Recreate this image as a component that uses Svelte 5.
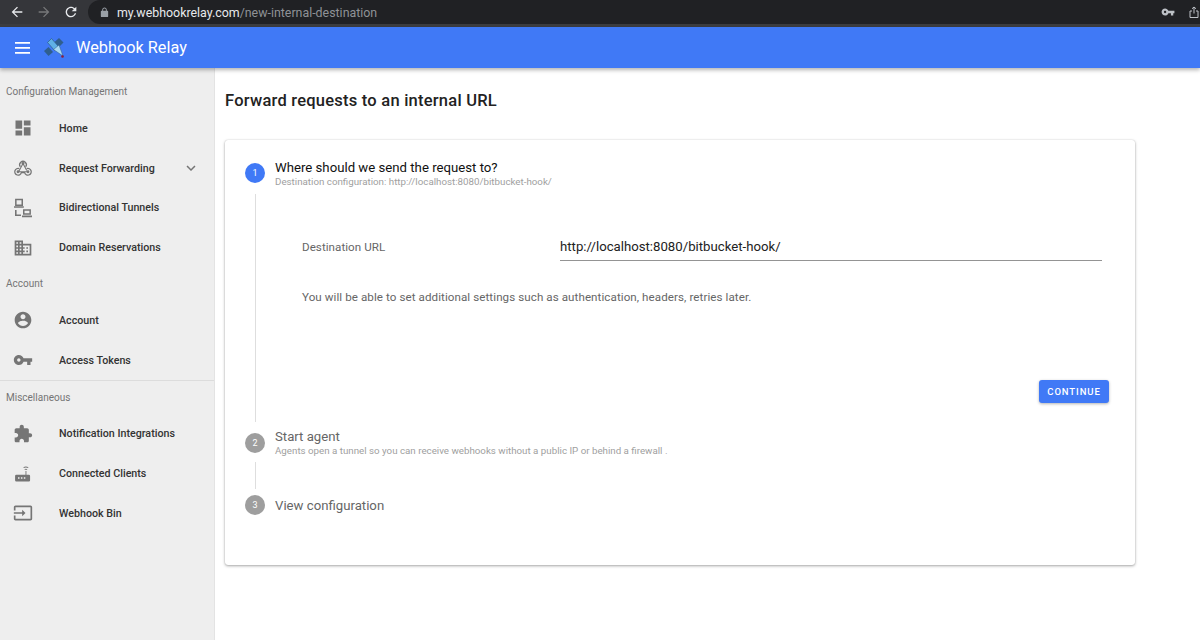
<script>
  const groups = [
    { title: 'Configuration Management', items: [
      ['Home', 'dashboard'], ['Request Forwarding', 'webhook', true], ['Bidirectional Tunnels', 'tunnels'], ['Domain Reservations', 'domain']
    ]},
    { title: 'Account', items: [['Account', 'account'], ['Access Tokens', 'key']] },
    { title: 'Miscellaneous', divider: true, items: [['Notification Integrations', 'puzzle'], ['Connected Clients', 'router'], ['Webhook Bin', 'input']] }
  ];
</script>

{#snippet icon(name)}
  <svg class="icon" viewBox="0 0 24 24" fill="#757575">
    {#if name === 'dashboard'}
      <path d="M3 13h8V3H3v10zm0 8h8v-6H3v6zm10 0h8V11h-8v10zm0-18v6h8V3h-8z"/>
    {:else if name === 'webhook'}
      <g fill="none" stroke="#757575" stroke-width="1.500">
        <path d="M8.800 10.500A4 4 0 1 1 15.200 10.500"/>
        <path d="M7.500 12.800A4 4 0 1 0 10 17.500h4A4 4 0 1 0 16.500 12.800"/>
        <path d="M12 6.500 7 16M12 6.500 16.500 15M7 16.500h10.500" stroke-width="1.300"/>
      </g>
      <circle cx="12" cy="6.500" r="1.700"/><circle cx="6" cy="16.500" r="1.700"/><circle cx="18" cy="16.500" r="1.700"/>
    {:else if name === 'tunnels'}
      <path fill-rule="evenodd" d="M2.500 1h9.500v8.500H2.500zM4.300 2.800v4.900h5.900V2.800zM1.200 10h11.800v1.800H1.200zM12 13.500h9.500V20H12zm1.800 1.800v2.900h5.900v-2.900zM10.800 21h12v2H10.800zM2.400 14.500h1.900v5.200h5.300v1.900H2.400z"/>
    {:else if name === 'domain'}
      <path d="M12 7V3H2v18h20V7H12zM6 19H4v-2h2v2zm0-4H4v-2h2v2zm0-4H4V9h2v2zm0-4H4V5h2v2zm4 12H8v-2h2v2zm0-4H8v-2h2v2zm0-4H8V9h2v2zm0-4H8V5h2v2zm10 12h-8v-2h2v-2h-2v-2h2v-2h-2V9h8v10zm-2-8h-2v2h2v-2zm0 4h-2v2h2v-2z"/>
    {:else if name === 'account'}
      <path d="M12 2C6.480 2 2 6.480 2 12s4.480 10 10 10 10-4.480 10-10S17.520 2 12 2zm0 3c1.660 0 3 1.340 3 3s-1.340 3-3 3-3-1.340-3-3 1.340-3 3-3zm0 14.200c-2.500 0-4.710-1.280-6-3.220.03-1.990 4-3.080 6-3.080 1.990 0 5.970 1.090 6 3.080-1.290 1.940-3.500 3.220-6 3.220z"/>
    {:else if name === 'key'}
      <path d="M12.650 10C11.830 7.670 9.610 6 7 6c-3.310 0-6 2.690-6 6s2.690 6 6 6c2.610 0 4.830-1.670 5.650-4H17v4h4v-4h2v-4H12.650zM7 14c-1.100 0-2-.9-2-2s.9-2 2-2 2 .9 2 2-.9 2-2 2z"/>
    {:else if name === 'puzzle'}
      <path d="M20.500 11H19V7c0-1.100-.9-2-2-2h-4V3.500C13 2.120 11.880 1 10.500 1S8 2.120 8 3.500V5H4c-1.100 0-1.990.9-1.990 2v3.800H3.500c1.490 0 2.700 1.210 2.700 2.700s-1.210 2.700-2.700 2.700H2V20c0 1.100.9 2 2 2h3.800v-1.500c0-1.490 1.210-2.700 2.700-2.700 1.490 0 2.700 1.210 2.700 2.700V22H17c1.100 0 2-.9 2-2v-4h1.500c1.380 0 2.500-1.120 2.500-2.500S21.880 11 20.500 11z"/>
    {:else if name === 'router'}
      <path d="M15.500 3c1.200 0 2.300.4 3.200 1.100l-.7.8c-.7-.5-1.600-.8-2.500-.8s-1.800.3-2.500.8l-.7-.8c.9-.7 2-1.100 3.200-1.100zM15.500 5.800c.7 0 1.300.2 1.800.6l-.7.8c-.3-.2-.7-.3-1.100-.3s-.8.1-1.100.3l-.7-.8c.5-.4 1.100-.6 1.800-.6z"/>
      <path fill-rule="evenodd" d="M15 8.500h1.100V13H19a1.500 1.500 0 0 1 1.500 1.500v5A1.500 1.500 0 0 1 19 21H4a1.500 1.500 0 0 1-1.500-1.500v-5A1.500 1.500 0 0 1 4 13h11zM6 16v1.800h1.800V16zm3.500 0v1.800h1.800V16zm3.500 0v1.800h1.800V16z"/>
    {:else if name === 'input'}
      <path d="M21 3.010H3c-1.100 0-2 .9-2 2V9h2V4.990h18v14.030H3V15H1v4.010c0 1.100.9 1.980 2 1.980h18c1.100 0 2-.88 2-1.980v-14c0-1.110-.9-2-2-2zM11 16l4-4-4-4v3H1v2h10v3z"/>
    {/if}
  </svg>
{/snippet}

<div class="page">
  <div class="chrome">
    <svg class="cicon" viewBox="0 0 24 24" fill="#e8eaed"><path d="M20 11H7.830l5.590-5.590L12 4l-8 8 8 8 1.410-1.410L7.830 13H20v-2z"/></svg>
    <svg class="cicon" viewBox="0 0 24 24" fill="#77787a"><path d="M12 4l-1.410 1.410L16.170 11H4v2h12.170l-5.580 5.590L12 20l8-8z"/></svg>
    <svg class="cicon" viewBox="0 0 24 24" fill="#e8eaed"><path d="M17.650 6.350C16.200 4.900 14.210 4 12 4c-4.420 0-7.990 3.580-7.990 8s3.570 8 7.990 8c3.730 0 6.840-2.550 7.730-6h-2.080c-.82 2.330-3.040 4-5.650 4-3.310 0-6-2.690-6-6s2.690-6 6-6c1.660 0 3.140.69 4.220 1.780L13 11h7V4l-2.350 2.350z"/></svg>
    <div class="omnibox">
      <svg class="lock" viewBox="0 0 24 24" fill="#9aa0a6"><path d="M18 8h-1V6c0-2.760-2.240-5-5-5S7 3.240 7 6v2H6c-1.100 0-2 .9-2 2v10c0 1.100.9 2 2 2h12c1.100 0 2-.9 2-2V10c0-1.100-.9-2-2-2zM9 8V6c0-1.660 1.340-3 3-3s3 1.340 3 3v2H9z"/></svg>
      <span class="host">my.webhookrelay.com</span><span class="path">/new-internal-destination</span>
      <svg class="ckey" viewBox="0 0 24 24" fill="#bdc1c6"><path d="M12.650 10C11.830 7.670 9.610 6 7 6c-3.310 0-6 2.690-6 6s2.690 6 6 6c2.610 0 4.830-1.670 5.650-4H17v4h4v-4h2v-4H12.650zM7 14c-1.100 0-2-.9-2-2s.9-2 2-2 2 .9 2 2-.9 2-2 2z"/></svg>
      <svg class="cshare" viewBox="0 0 24 24" fill="none" stroke="#bdc1c6" stroke-width="2"><path d="M8 10H4v13h16V10h-4M12 15V2M8 5.500 12 2l4 3.500"/></svg>
    </div>
  </div>

  <header class="appbar">
    <svg class="menu" viewBox="0 0 15 12" fill="#fff"><path d="M0 0h15v1.700H0zM0 5h15v1.700H0zM0 10h15v1.700H0z"/></svg>
    <svg class="logo" viewBox="0 0 22 22">
      <path d="M11 5.500 16 1l4.500 4.500L15.500 10.500z" fill="#2f5f8f"/>
      <path d="M1 14 5.500 10l4.500 5-4.500 4z" fill="#2f5f8f"/>
      <path d="M4.500 5.500 8.500 1.500l7 8-4 4z" fill="#5fb0e6" stroke="#2c5a86" stroke-width=".7"/>
      <path d="M10.500 12.500 16 8l4 11z" fill="#a9d8f2" stroke="#2c5a86" stroke-width=".5"/>
      <circle cx="19.500" cy="19.500" r="1.300" fill="#8a1f3d"/>
    </svg>
    <span class="brand">Webhook Relay</span>
  </header>

  <div class="body">
    <aside class="side">
      {#each groups as g, i}
        <div class="group" class:divided={g.divider} class:first={i === 0}>
          <div class="heading">{g.title}</div>
          {#each g.items as [label, ic, chevron]}
            <div class="item">
              {@render icon(ic)}
              <span class="label">{label}</span>
              {#if chevron}
                <svg class="chev" viewBox="0 0 24 24" fill="#757575"><path d="M16.590 8.590 12 13.170 7.410 8.590 6 10l6 6 6-6z"/></svg>
              {/if}
            </div>
          {/each}
        </div>
      {/each}
    </aside>

    <main class="main">
      <h1>Forward requests to an internal URL</h1>
      <section class="card">
        <div class="step one">
          <span class="dot active">1</span>
          <div class="stext">
            <div class="stitle active">Where should we send the request to?</div>
            <div class="ssub">Destination configuration: http://localhost:8080/bitbucket-hook/</div>
          </div>
        </div>
        <div class="content">
          <div class="field">
            <span class="flabel">Destination URL</span>
            <div class="finput">http://localhost:8080/bitbucket-hook/</div>
          </div>
          <p class="help">You will be able to set additional settings such as authentication, headers, retries later.</p>
          <div class="actions"><button class="btn">CONTINUE</button></div>
        </div>
        <div class="step two">
          <span class="dot">2</span>
          <div class="stext">
            <div class="stitle">Start agent</div>
            <div class="ssub">Agents open a tunnel so you can receive webhooks without a public IP or behind a firewall .</div>
          </div>
        </div>
        <div class="connector"></div>
        <div class="step three">
          <span class="dot">3</span>
          <div class="stext"><div class="stitle">View configuration</div></div>
        </div>
      </section>
    </main>
  </div>
</div>

<style>
  :global(body) { margin: 0; background: #fff; }
  .page { width: 1200px; height: 640px; overflow: hidden; font-family: Roboto, "Liberation Sans", sans-serif; display: flex; flex-direction: column; }

  .chrome { height: 27px; flex: none; box-sizing: border-box; background: #35363a; border-bottom: 3px solid #3c3d40; display: flex; align-items: center; padding-left: 9px; color: #fff; }
  .cicon { width: 16px; height: 16px; margin-right: 11px; flex: none; }
  .cicon:nth-child(3) { margin-right: 9px; }
  .omnibox { flex: 1; height: 24px; background: #202124; border-radius: 12px 0 0 12px; display: flex; align-items: center; font-size: 12.400px; box-sizing: border-box; padding: 0 0 0 11px; }
  .lock { width: 11px; height: 11px; margin-right: 7px; }
  .host { color: #e8eaed; }
  .path { color: #8f9296; }
  .ckey { width: 14px; height: 14px; margin-left: auto; flex: none; }
  .cshare { width: 12px; height: 14px; margin-left: 13px; flex: none; }

  .appbar { height: 41px; flex: none; background: #4079f6; display: flex; align-items: center; padding-left: 15px; box-shadow: 0 2px 4px rgba(0,0,0,.3); position: relative; z-index: 2; }
  .menu { width: 15px; height: 12px; margin-right: 13px; }
  .logo { width: 22px; height: 22px; margin-right: 11px; }
  .brand { color: #fff; font-size: 16.300px; }

  .body { flex: 1; display: flex; min-height: 0; }
  .side { width: 215px; flex: none; box-sizing: border-box; background: #eee; border-right: 1px solid #e3e3e3; }
  .group.first { padding-top: 7.500px; }
  .group.divided { border-top: 1px solid #dcdcdc; }
  .heading { height: 33px; line-height: 32px; padding-left: 6px; font-size: 10px; color: #757575; }
  .first .heading { line-height: 31px; }
  .divided .heading { line-height: 33px; }
  .item { height: 39.750px; display: flex; align-items: center; padding-left: 13px; position: relative; }
  .icon { width: 20px; height: 20px; flex: none; margin-right: 26px; }
  .label { font-size: 10.700px; font-weight: 500; color: #333; }
  .chev { width: 18px; height: 18px; position: absolute; left: 182px; top: 11px; }

  .main { flex: 1; padding: 24px 0 0 10px; min-width: 0; }
  h1 { margin: 0; height: 48px; line-height: 18px; font-size: 16.500px; letter-spacing: .23px; font-weight: 500; color: #222; }
  .card { width: 910px; height: 425px; box-sizing: border-box; background: #fff; border-radius: 3px; box-shadow: 0 1px 3px rgba(0,0,0,.35), 0 0 1px rgba(0,0,0,.2); padding: 23px 20px 0; }
  .step { display: flex; align-items: flex-start; height: 21px; }
  .dot { width: 20px; height: 20px; border-radius: 50%; background: #9e9e9e; color: #fff; font-size: 9px; display: flex; align-items: center; justify-content: center; flex: none; margin-right: 10px; }
  .two .dot { margin-top: 2px; }
  .dot.active { background: #4079f6; }
  .stext { margin-top: -2px; }
  .two .stext { margin-top: -1px; }
  .stitle { font-size: 13.200px; color: #666; line-height: 14px; }
  .stitle.active { color: #111; }
  .ssub { font-size: 9.750px; color: #a0a0a0; line-height: 11px; margin-top: 1px; }
  .content { margin: 10px 0 0 10px; height: 228px; border-left: 1px solid #dedede; padding-left: 46px; box-sizing: border-box; }
  .field { display: flex; align-items: flex-start; padding-top: 43px; height: 24px; box-sizing: content-box; }
  .flabel { width: 258px; flex: none; font-size: 11.600px; color: #666; line-height: 20px; letter-spacing: .05px; }
  .finput { width: 542px; height: 24px; box-sizing: border-box; border-bottom: 1px solid #949494; font-size: 13.200px; color: #222; line-height: 19px; }
  .help { margin: 28px 0 0; font-size: 11.600px; color: #666; line-height: 16px; letter-spacing: .077px; }
  .actions { display: flex; justify-content: flex-end; margin-top: 75px; padding-right: 6px; }
  .btn { width: 70px; height: 23px; padding: 0; border: 0; background: #4079f6; color: #fff; font: 500 9.500px Roboto, sans-serif; letter-spacing: .9px; border-radius: 3px; box-shadow: 0 1px 3px rgba(0,0,0,.3); }
  .step.two { margin-top: 9px; }
  .connector { margin: 10px 0 0 10px; height: 27px; border-left: 1px solid #dedede; }
  .step.three { margin-top: 6px; height: 20px; align-items: center; }
  .three .stext { margin-top: 2px; }
</style>
